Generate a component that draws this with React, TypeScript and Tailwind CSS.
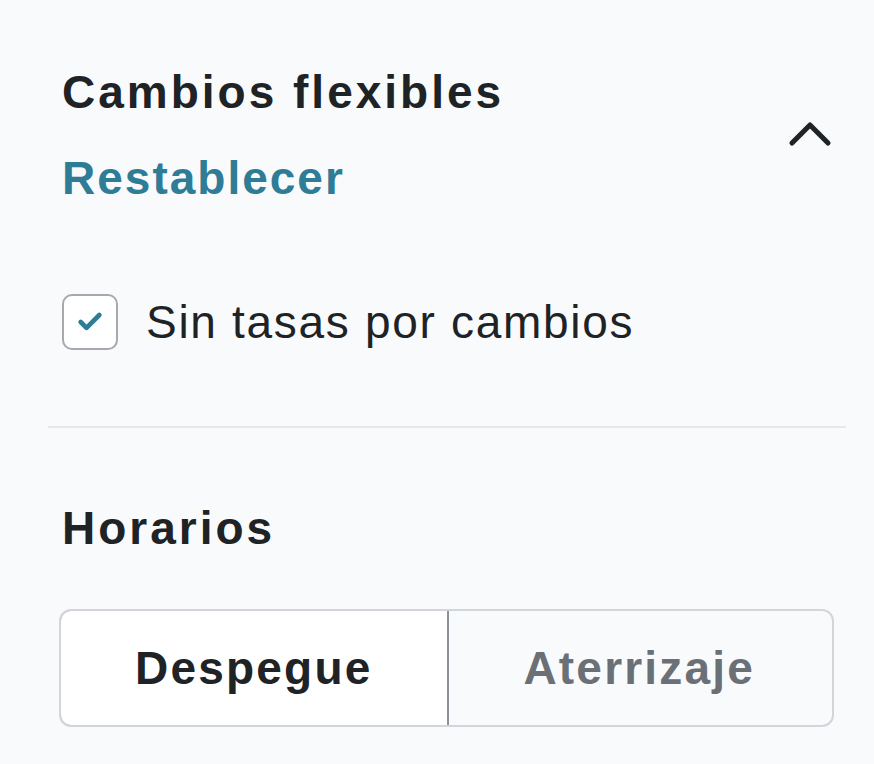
import { ChevronUp, Check } from "lucide-react";

export default function App() {
  return (
    <div className="min-h-[764px] w-[874px] bg-[#f8fafc] font-['Liberation_Sans',Arial,sans-serif] text-[#202326]">
      <div className="pl-[48px] pr-[28px]">
        <section className="pl-[14px] pt-[66px] pb-[76px]">
          <div className="flex items-start justify-between">
            <div>
              <h2 className="text-[46px] font-bold leading-[52px] tracking-[3px]">Cambios flexibles</h2>
              <button className="mt-[34px] block text-[46px] font-bold leading-[52px] tracking-[2px] text-[#2f7c97]">
                Restablecer
              </button>
            </div>
            <ChevronUp className="mt-[32px] mr-0 h-[72px] w-[72px] text-[#202326]" strokeWidth={1.7} />
          </div>
          <label className="mt-[90px] flex items-center gap-[28px]">
            <span className="flex h-[56px] w-[56px] items-center justify-center rounded-[10px] border-2 border-[#a6a9ad] bg-white">
              <Check className="h-[28px] w-[28px] text-[#2f7c97]" strokeWidth={4} />
            </span>
            <span className="text-[46px] leading-[52px] tracking-[1.7px]">Sin tasas por cambios</span>
          </label>
        </section>
        <div className="h-[2px] bg-[#e6e8eb]" />
        <section className="pl-[14px] pt-[74px] pr-[12px]">
          <h3 className="text-[46px] font-bold leading-[52px] tracking-[3px]">Horarios</h3>
          <div className="mt-[55px] -ml-[3px] flex h-[118px] overflow-hidden rounded-[12px] border-2 border-[#d2d5d9]">
            <button className="-m-[2px] flex flex-1 items-center justify-center rounded-l-[12px] border-2 border-[#8c9197] bg-white text-[46px] font-bold tracking-[2.2px] text-[#202326]">
              Despegue
            </button>
            <button className="flex flex-1 items-center justify-center text-[46px] font-bold tracking-[2.2px] text-[#6b7076]">
              Aterrizaje
            </button>
          </div>
        </section>
      </div>
    </div>
  );
}
